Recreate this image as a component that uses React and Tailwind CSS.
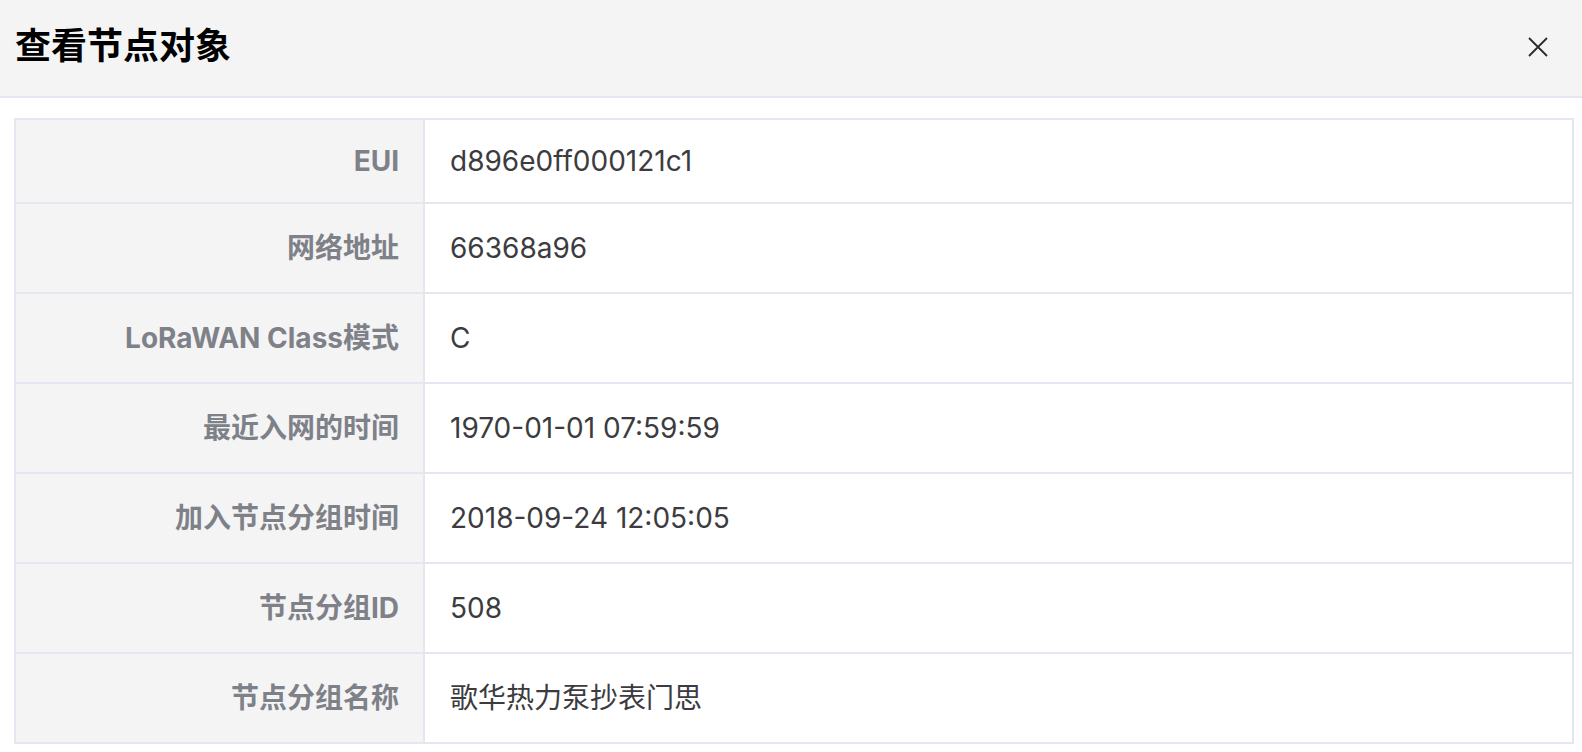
import React from "react";

const rows = [
  ["EUI", "d896e0ff000121c1"],
  ["网络地址", "66368a96"],
  ["LoRaWAN Class模式", "C"],
  ["最近入网的时间", "1970-01-01 07:59:59"],
  ["加入节点分组时间", "2018-09-24 12:05:05"],
  ["节点分组ID", "508"],
  ["节点分组名称", "歌华热力泵抄表门思"],
];

const font = {
  fontFamily: '"Inter", "Noto Sans CJK SC", sans-serif',
};

export default function App() {
  return (
    <div className="w-[1582px] h-[752px] bg-white overflow-hidden" style={font}>
      <div className="h-[98px] bg-[#f4f4f4] border-b-2 border-[#e4e7ef] flex items-center justify-between pl-[15px] pr-[34px]">
        <div className="text-[36px] font-bold text-black leading-none -mt-[4px]">查看节点对象</div>
        <svg width="20" height="20" viewBox="0 0 20 20" className="-mt-[3px]">
          <path d="M1 1 L19 19 M19 1 L1 19" stroke="#2b2b2b" strokeWidth="1.8" fill="none" />
        </svg>
      </div>
      <div className="pt-[20px] pl-[14px]">
        <div className="w-[1560px] border-2 border-b-0 border-[#e4e7ef]">
          {rows.map(([k, v], i) => (
            <div
              key={k}
              className={`flex border-b-2 border-[#e4e7ef] ${i === 0 ? "h-[84px]" : "h-[90px]"}`}
            >
              <div className="w-[409px] shrink-0 bg-[#f4f4f5] border-r-2 border-[#e4e7ef] flex items-center justify-end pr-[24px] text-[28px] font-bold text-[#7e8188]">
                {k}
              </div>
              <div className="flex-1 flex items-center pl-[25px] text-[28px] text-[#3c3c40]">
                {v}
              </div>
            </div>
          ))}
        </div>
      </div>
    </div>
  );
}
